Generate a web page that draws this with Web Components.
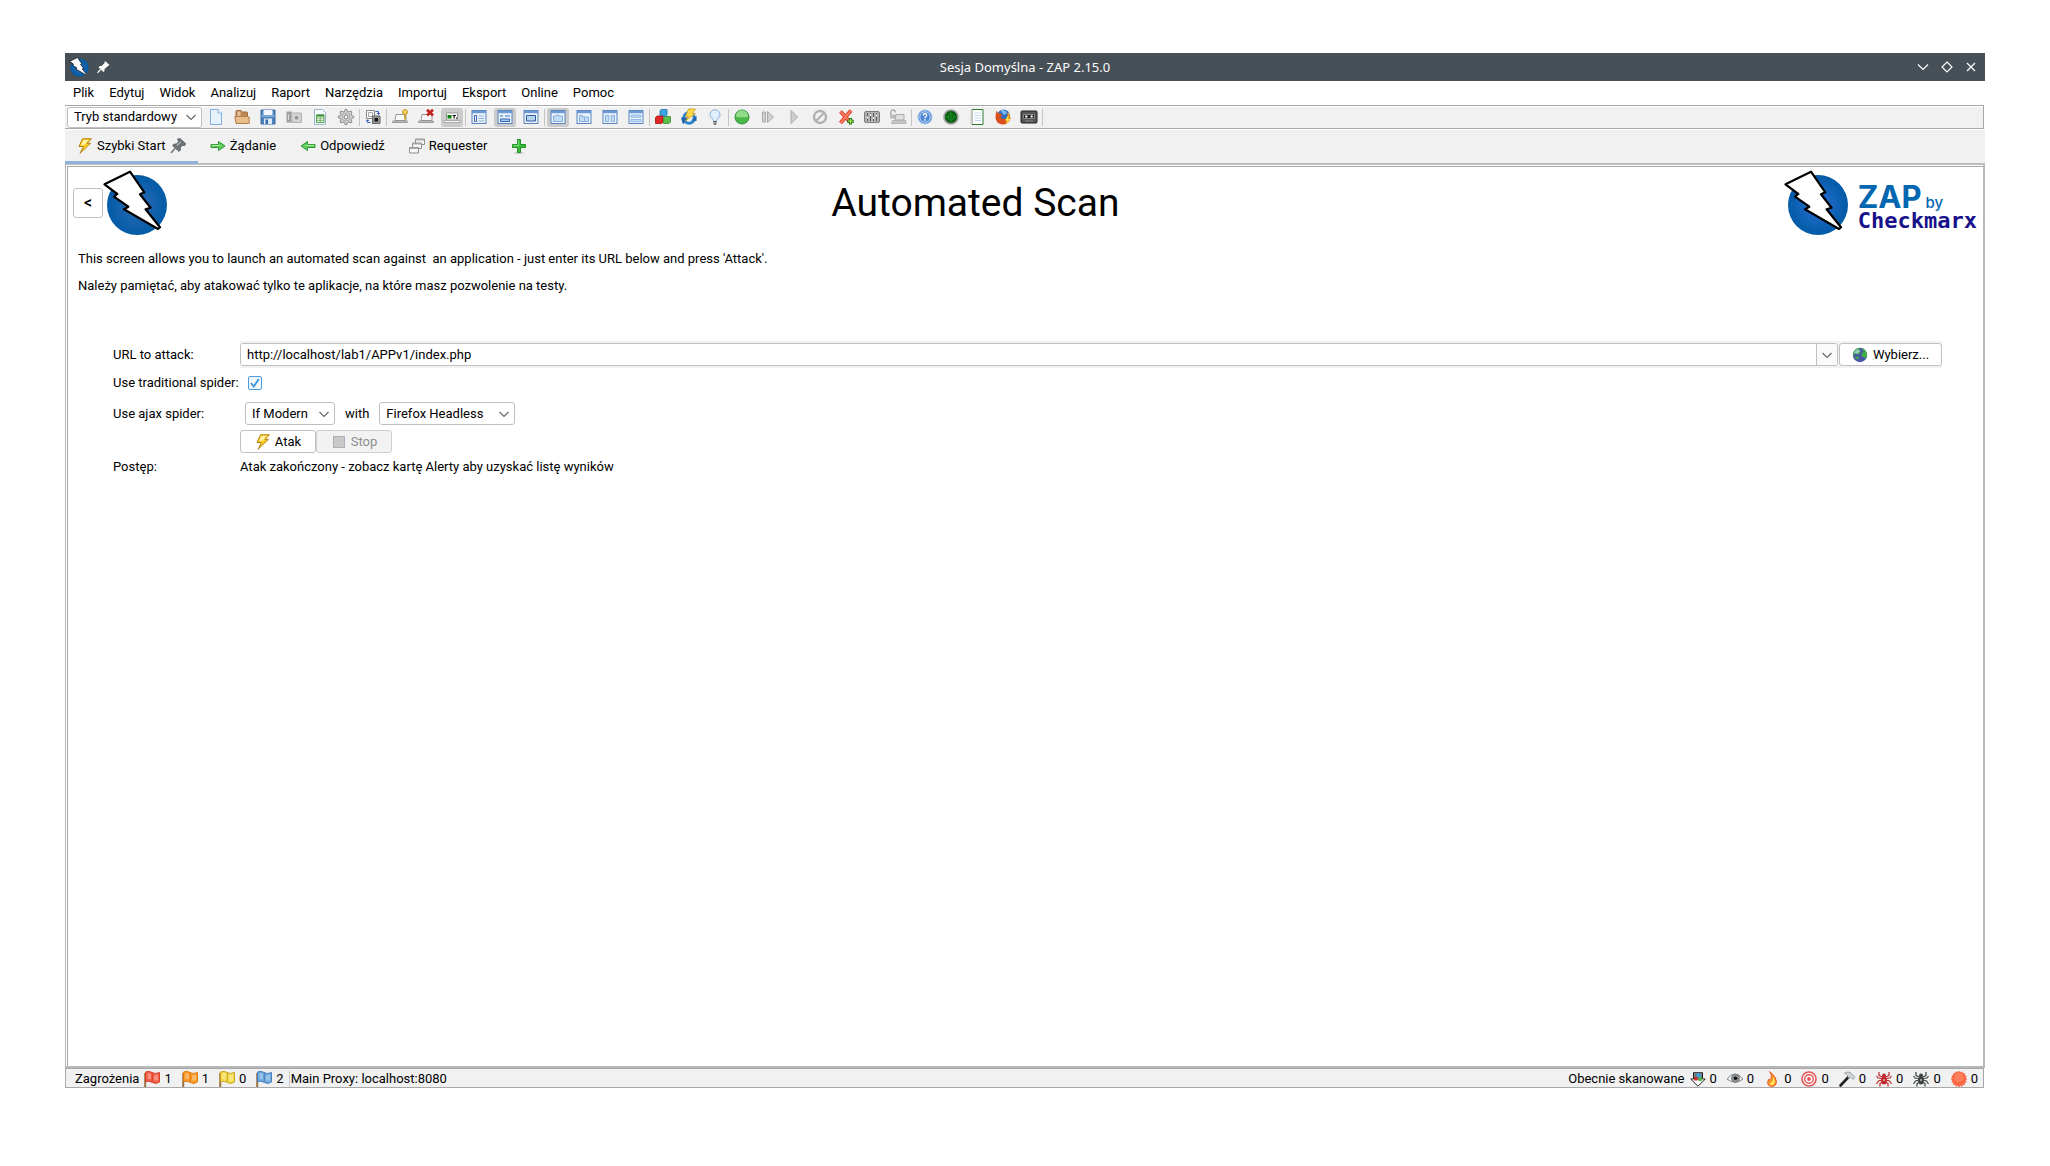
<!DOCTYPE html>
<html lang="pl">
<head>
<meta charset="utf-8">
<title>Sesja Domyślna - ZAP 2.15.0</title>
<style>
  body {
    margin: 0; box-sizing: border-box; min-height: 100vh; padding: 53px 65px 78px;
    background: #fff; color: #000; display: flex;
    font: 13px/16px Roboto, "Liberation Sans", sans-serif;
  }
</style>
</head>
<body>
<zap-window>
  <zap-titlebar slot="title">Sesja Domyślna - ZAP 2.15.0</zap-titlebar>
  <zap-menubar slot="menu" items="Plik,Edytuj,Widok,Analizuj,Raport,Narzędzia,Importuj,Eksport,Online,Pomoc"></zap-menubar>
  <zap-toolbar slot="toolbar"></zap-toolbar>
  <zap-tabs slot="tabs"></zap-tabs>
  <zap-scan></zap-scan>
  <zap-statusbar slot="status"></zap-statusbar>
</zap-window>

<script>
const BOLT = 'M1.5 14.3L27 1.7L41.3 22.3L37 24.3L47.6 37.7L42.6 39.3L57 57.2L55 59L21 39.3L25.3 36.7L11 26.7L14.3 24Z';
const PANE = '<rect x="1" y="1.5" width="14" height="13" fill="#eaf3fc" stroke="#5b84bd"/><path d="M1 3h14" stroke="#6d9ad6" stroke-width="2.4"/>';
const POLE = '<path d="M1.2 2V16" stroke="#9a7340" stroke-width="2"/>';
const flag = (a, b) => POLE + `<path d="M1.5 1Q5 -.5 8 1.500Q11 3.500 15.500 1.500V11Q12 13.500 8.500 11.500Q5 9.500 1.500 10.500Z" fill="${a}" stroke="${b}"/><path d="M3.500 2.500Q6 2 7 3V8.500Q5 7.500 3.500 8ZM10 4.500L14 3.800V9.500H10Z" fill="#fff" opacity=".3"/><path d="M8.300 2V11" stroke="${b}"/>`;
const spider = c => `<g stroke="${c}" fill="none" stroke-width="1.2"><path d="M6.500 6L3 4.500V1M9.500 6L13 4.500V1M6 7.500L2 7L.5 5M10 7.500L14 7L15.500 5M6 9L2.500 10L.5 13M10 9L13.500 10L15.500 13M6.500 11L4 12.500V15.500M9.500 11L12 12.500V15.500"/></g><circle cx="8" cy="4.500" r="2" fill="${c}"/><ellipse cx="8" cy="9.500" rx="2.900" ry="4" fill="${c}"/><path d="M7 8l2 2M9 8l-2 2" stroke="#ddd" stroke-width=".6"/>`;
const laptop = '<path d="M4 5.500H14V11.500H3Z" fill="#fafafa" stroke="#999"/><path d="M.7 12H15.300V13.500H.7Z" fill="#ddd" stroke="#888" stroke-width=".8"/>';
const star = (() => { let p = ''; for (let i = 0; i < 32; i++) { const r = i % 2 ? 6.600 : 8, a = i * Math.PI / 16; p += (i ? 'L' : 'M') + (8 + r * Math.cos(a)).toFixed(2) + ' ' + (8 + r * Math.sin(a)).toFixed(2); } return p + 'Z'; })();
const gearPath = (() => { let p = ''; for (let i = 0; i < 32; i++) { const r = (i % 4 < 2) ? 7.700 : 5.700, a = (i - .5) * Math.PI / 16; p += (i ? 'L' : 'M') + (8 + r * Math.cos(a)).toFixed(2) + ' ' + (8 + r * Math.sin(a)).toFixed(2); } return p + 'Z'; })();

const ICONS = {
  page: '<path d="M2.500.5H10L13.500 4V15.500H2.500Z" fill="#e6f3fd" stroke="#7fb0dc"/><path d="M10 .5V4H13.500" fill="#fff" stroke="#7fb0dc"/>',
  folder: '<path d="M2 13V2.500Q2 1.500 3 1.500H7L8 3H12.500Q13.500 3 13.500 4V13Z" fill="#bf8a55" stroke="#9c6a3c"/><path d="M.8 7.500H13L15.200 8V14.500H2Z" fill="#e9bd8c" stroke="#b27f4b"/><path d="M3.500 2.500H6.500V7H3.500Z" fill="#e8c49c"/>',
  save: '<path d="M1 1H15V15H1Z" fill="#4f84bf" stroke="#3868a6"/><path d="M3.500 1H12.500V6H3.500Z" fill="#f4f8fc"/><path d="M1.500 7H14.500" stroke="#8fb8e2" stroke-width="1.500"/><path d="M4 9.500H12V15H4Z" fill="#dfe9f2"/><path d="M5.500 10.500H8V15H5.500Z" fill="#3868a6"/>',
  camera: '<path d="M.5 2.500H6V13.500H.5Z" fill="#a0a0a0"/><path d="M5.500 4H15.500V13.500H5.500Z" fill="#cfcfcf" stroke="#b4b4b4"/><circle cx="10.500" cy="8.700" r="3" fill="#b5b5b5" stroke="#e6e6e6"/><circle cx="10.500" cy="8.700" r="1.200" fill="#888"/><path d="M2.500 5.500V11" stroke="#ddd"/>',
  sheet: '<path d="M2.500.5H10.500L13.500 3.500V15.500H2.500Z" fill="#f5faff" stroke="#9ab6d0"/><path d="M4.500 6H12V13.500H4.500Z" fill="#eef8ec" stroke="#4f9f45"/><path d="M4.500 6.500H12" stroke="#3f9436" stroke-width="2"/><path d="M4.500 9H12M4.500 11.300H12M8.200 7V13.500" stroke="#6fae66" stroke-width=".9"/>',
  gear: `<path d="${gearPath}" fill="#d2d2d2" stroke="#7c7c7c" stroke-width=".9"/><circle cx="8" cy="8" r="4" fill="#dedede" stroke="#999" stroke-width=".7"/><circle cx="8" cy="8" r="2" fill="#fff" stroke="#777"/>`,
  screens: '<path d="M1.500 1.500H9.500V9.500H1.500Z" fill="#fafafa" stroke="#888"/><path d="M3.500 3.500H7.500V7.500H3.500Z" fill="none" stroke="#aaa"/><path d="M7.500 7H15V14.500H7.500Z" fill="#999" stroke="#666"/><path d="M9.500 9H13V12.500H9.500Z" fill="#111"/><path d="M10.500 2.500H13.500V5M12 4L13.500 5.500L15 4M5.500 13.500H2.500V11M1 12.200L2.500 10.700L4 12.200" fill="none" stroke="#3c62c4"/>',
  laptopKey: laptop + '<circle cx="13" cy="3" r="2.600" fill="#f2cf55" stroke="#b08a20" stroke-width=".7"/><path d="M13 5V10.500" stroke="#c79a27" stroke-width="1.800"/>',
  laptopX: laptop + '<path d="M9 .8L15 6.500M15 .8L9 6.500" stroke="#c62222" stroke-width="2.600"/>',
  laptopT: '<path d="M2.500 4H13.500V11H2.500Z" fill="#fff" stroke="#999"/><path d="M0 11.500H16V13.500H0Z" fill="#f4f4f4" stroke="#999" stroke-width=".7"/><path d="M3.500 6H7.500V9.500H3.500Z" fill="#0a7a0a"/><path d="M8.500 6.500H12M10.200 6.500V9.500M12 9.200H13" stroke="#111" stroke-width="1.200"/>',
  paneLeft: PANE + '<path d="M3.500 6.500H5.500V12.500H3.500Z" fill="#fff" stroke="#3b68ad"/><path d="M7.500 7H13M7.500 9.500H13M7.500 12H13" stroke="#8fb3e0"/>',
  paneBottom: PANE + '<path d="M3 7H6M8 7H13" stroke="#8fb3e0" stroke-width="2"/><path d="M3.500 10H12.500V12.500H3.500Z" fill="#a9caf0" stroke="#2f61a8"/>',
  paneFull: PANE + '<path d="M3.500 6.500H12.500V12H3.500Z" fill="#b5d3f3" stroke="#34599a"/>',
  tabOne: PANE + '<path d="M3.500 7H6L6.500 6H8.500L9 7H12.500V12.500H3.500Z" fill="#c3dcf6" stroke="#86afe0"/>',
  tabTwo: PANE + '<path d="M3.500 6.500H6.500V8H8.500V12.500H3.500ZM8.500 8H12.500V12.500H8.500Z" fill="#c3dcf6" stroke="#86afe0"/>',
  split: PANE + '<path d="M3.500 6.500H6.800V12.500H3.500ZM9.200 6.500H12.500V12.500H9.200Z" fill="#c3dcf6" stroke="#86afe0"/>',
  rows: PANE + '<path d="M3 6H13V8.200H3ZM3 10.500H13V12.700H3Z" fill="#c3dcf6" stroke="#86afe0" stroke-width=".8"/>',
  blocks: '<path d="M5 1.500L6.500.5H12V6L10.500 7.500H5Z" fill="#38a3df" stroke="#1f77b5" stroke-width=".8"/><path d="M.5 8.500L2 7H8V13L6.500 14.500H.5Z" fill="#df2828" stroke="#a81010" stroke-width=".8"/><path d="M8.500 9L10 7.500H15.500V13L14 14.500H8.500Z" fill="#5cc14a" stroke="#35912a" stroke-width=".8"/>',
  update: '<circle cx="8" cy="9" r="5.300" fill="none" stroke="#2d85cf" stroke-width="3"/><path d="M0 8.500H7L2 15.500ZM15.500 6.500L10 11.500L15.500 12Z" fill="#1d64ad"/><path d="M7.500 0H14.500L11.500 4.500H14.500L4.500 12L7.500 7.500H4.500Z" fill="#ffd94a" stroke="#c69513" stroke-width=".7"/>',
  bulb: '<circle cx="8" cy="5.700" r="5" fill="#dcedfc" stroke="#8cb4e0"/><path d="M5.500 10L6.500 12H9.500L10.500 10" fill="#eef6fd" stroke="#8cb4e0" stroke-width=".8"/><path d="M6 12.500H10M6 14H10M7 15.400H9" stroke="#666" stroke-width="1.100"/><path d="M6.500 5L8 7L9.500 5" fill="none" stroke="#fff"/>',
  green: '<circle cx="8" cy="8" r="7" fill="#4cb84a" stroke="#33913a"/><path d="M1.800 7.500A6.200 6.200 0 0 1 14.200 7.500Q8 9.200 1.800 7.500Z" fill="#90dc88"/>',
  step: '<path d="M2.500 3H5.500V13H2.500ZM7.500 2.500L13.500 8L7.500 13.500Z" fill="#d0d0d0" stroke="#a8a8a8"/>',
  play: '<path d="M5 1.500L11.500 8L5 14.500Z" fill="#cfcfcf" stroke="#a8a8a8"/>',
  ban: '<circle cx="8" cy="8" r="6" fill="none" stroke="#b0b0b0" stroke-width="2.400"/><path d="M4.500 11.500L11.500 4.500" stroke="#b0b0b0" stroke-width="2.200"/>',
  xplus: '<path d="M2.500 2.500L12 13M13 1.500L2.500 14" stroke="#d93a22" stroke-width="3.800"/><path d="M2.500 2.500L12 13M13 1.500L2.500 14" stroke="#fc7a5e" stroke-width="2"/><path d="M12.500 9V15.500M9.300 12.200H15.700" stroke="#176b12" stroke-width="3"/><path d="M12.500 9.700V14.800M10 12.200H15" stroke="#a7e651" stroke-width="1.300"/>',
  sliders: '<rect x=".5" y="2.500" width="15" height="11" rx="1.500" fill="#b4b4b4" stroke="#7c7c7c"/><path d="M3.500 4V12M6.500 4V12M9.500 4V12M12.500 4V12" stroke="#555" stroke-width="1"/><path d="M3 8.500H4M6 6H7M9 9H10M12 6.500H13" stroke="#fff" stroke-width="2"/>',
  lockLaptop: '<path d="M.8 7V3.500Q.8 1 3 1T5.300 3.500" fill="none" stroke="#aaa" stroke-width="1.400"/><path d="M0 5.500H6V9.500H0Z" fill="#bbb"/><path d="M6 5.500H14V11H5Z" fill="#dedede" stroke="#aaa"/><path d="M2.500 11.500H16V14.500H1.500Z" fill="#c4c4c4" stroke="#aaa" stroke-width=".7"/>',
  help: '<circle cx="8" cy="8" r="7" fill="#5f96da" stroke="#9ebfe8"/><circle cx="8" cy="8" r="5.200" fill="#4b86d0" stroke="#cfe1f6" stroke-width=".8"/><path d="M6.200 6.500Q6.300 4.800 8 4.800T9.800 6.300Q9.800 7.300 8 8.300V9.300M8 10.300V11.700" fill="none" stroke="#fff" stroke-width="1.400"/>',
  radar: '<circle cx="8" cy="8" r="7" fill="#0a5a12" stroke="#a0a0a0" stroke-width="1.700"/><circle cx="8" cy="8" r="3.200" fill="none" stroke="#1c9a2a" stroke-width=".8"/><path d="M8 2.500V13.500M2.500 8H13.500" stroke="#1c9a2a" stroke-width=".8"/>',
  notebook: '<path d="M3 .5H14V15.500H3Z" fill="#fff" stroke="#2f7d32"/><path d="M2.500 1V15" stroke="#fff" stroke-width="2.500"/><path d="M1.500 2H4M1.500 4H4M1.500 6H4M1.500 8H4M1.500 10H4M1.500 12H4M1.500 14H4" stroke="#888" stroke-width=".9"/><path d="M5.500 4H12M5.500 6.500H12M5.500 9H12M5.500 11.500H12" stroke="#c3daf1"/>',
  firefox: '<circle cx="8.500" cy="7" r="6.500" fill="#2e6fc0"/><path d="M5.500 1.500Q10 0 12 4L9 6Z" fill="#7fb9ee"/><path d="M1.500 1.500Q2.500 4.500 5 4.500L7.500 6L5.500 8Q7 11 11 9.500Q13.500 7 12.500 3Q17 8 14.500 12Q11.500 16 7 15.500Q0 14 .5 7Z" fill="#d9501c"/><path d="M14 4Q17 11 10 14.500Q14 10 12.500 4Z" fill="#f9a72b"/><path d="M13 6.500L10 11.500H12.500L11 15.500L15.700 10H13Z" fill="#ffe04a"/>',
  tape: '<rect x="0" y="2" width="16" height="12" rx="1" fill="#555" stroke="#222"/><path d="M2.500 5.500H13.500V9.500H2.500Z" fill="#222" stroke="#999" stroke-width=".8"/><circle cx="5.300" cy="7.500" r="1.200" fill="#e8e8e8"/><circle cx="10.700" cy="7.500" r="1.200" fill="#e8e8e8"/><path d="M4 12H12" stroke="#888"/>',
  bolt: '<path d="M5.500.8H14.500L10 5.300H13.500L3 15.300L6.500 8.500H2Z" fill="#ffd028" stroke="#b67d10" stroke-linejoin="round"/><path d="M6.500 2H11.500L7.500 6.500L4 7.500Z" fill="#fff3ae"/>',
  pin: '<path d="M7.500 1L10 .5L15.500 5.500L15 7.500H12.500L10.500 9.500V12L9 13.500L2.500 7.500L4 6H6.500L8.500 3.500Z" fill="#6d7376" stroke="#5a5f62" stroke-width=".8"/><path d="M5 10.500L1 15" stroke="#777" stroke-width="1.600"/><path d="M10.500 4L7 7.500" stroke="#a9aeb0" stroke-width="1.600"/>',
  whitePin: '<path d="M10 2L14.500 6L13 7L9.500 10L9.500 12L8.300 13L3.500 8.200L4.700 7H6.500L9.500 4Z" fill="#fff"/><path d="M5.500 10.500L2.500 13.800" stroke="#fff" stroke-width="1.200"/>',
  right: '<path d="M1 6.500H8.500V3.500L15 8L8.500 12.500V9.500H1Z" fill="#5fd05c" stroke="#2f9433" stroke-linejoin="round"/><path d="M2 7.400H9.500" stroke="#b4f0aa"/>',
  left: '<path d="M15 6.500H7.500V3.500L1 8L7.500 12.500V9.500H15Z" fill="#5fd05c" stroke="#2f9433" stroke-linejoin="round"/><path d="M14 7.400H6.500" stroke="#b4f0aa"/>',
  windows: '<g fill="#f6f6f6" stroke="#8f8f8f"><path d="M6.500 1H15.500V6.500H6.500Z"/><path d="M3.500 5H12.500V10.500H3.500Z"/><path d="M.5 9.500H9.500V15H.5Z"/></g><path d="M6.500 1.700H15.500M3.500 5.700H12.500M.5 10.200H9.500" stroke="#a8a8a8" stroke-width="1.600"/>',
  plus: '<ellipse cx="8" cy="15" rx="5" ry="1" fill="#ccc"/><path d="M6.500 1.500H9.500V6.500H14.500V9.500H9.500V14.500H6.500V9.500H1.500V6.500H6.500Z" fill="#3dbb3d" stroke="#1d9427" stroke-linejoin="round"/><path d="M7.500 2.500V7.500H2.500" fill="none" stroke="#85dd7e"/>',
  globe: '<circle cx="8" cy="8" r="7.200" fill="#4a55a8"/><path d="M3 3Q5 .8 8 1L7 3.500L9 5L6.500 7.500L3.500 6.500L1 9Q.5 5.500 3 3ZM9.500 1.300Q13.500 2 15 6.500Q15.500 10 13 11.500L11 9.500L9 9L10 6L12 5ZM2 10L6 9.500L7.500 11L5.500 12.500Z" fill="#3fae45"/><path d="M4 3Q6.500 1.500 8.500 4L5 7L2 6Z" fill="#c7d8f7" opacity=".65"/>',
  stop: '<rect x="2.500" y="2.500" width="11" height="11" fill="#c9c9c9" stroke="#b0b0b0"/>',
  flagRed: flag('#f4604a', '#d8402c'), flagOrange: flag('#fb9a2a', '#e07f10'), flagYellow: flag('#f6dc4c', '#c9a51b'), flagBlue: flag('#6fa8e0', '#4a80bd'),
  addon: '<path d="M3.500 1.500H12.500V8H15.300L8 15.300L.7 8H3.500Z" fill="#fff" stroke="#222" stroke-linejoin="round"/><path d="M4 1.500H12V9H4Z" fill="#777"/><path d="M6.500 2.500H11V6H6.500Z" fill="#3da0dd"/><path d="M4 6H7.500V9.500H4Z" fill="#d02a2a"/><path d="M8.500 6.500H12V10H8.500Z" fill="#4dbb45"/>',
  eye: '<path d="M0 8Q8-2 16 8Q8 14.500 0 8Z" fill="#f2f2f2" stroke="#8a8a8a"/><circle cx="8.500" cy="7.200" r="4" fill="#8d959c" stroke="#666" stroke-width=".7"/><circle cx="8.500" cy="7.200" r="1.800" fill="#111"/>',
  fire: '<path d="M5.500 .5Q8.500 4 7 7.500Q6 9.500 4.500 8.500Q2.500 12 4.500 14.200Q6 15.700 8.500 15.500Q12.500 15 12.500 10.500Q12 5 5.500 .5Z" fill="#f9922a" stroke="#e4521c" stroke-width=".9"/><path d="M9 5.500Q11.500 9.500 10.500 12.500Q9.500 14.500 7 14.300Q5.500 13.500 6 12Q9.500 10.500 9 5.500Z" fill="#ffe45c"/>',
  target: '<circle cx="8" cy="8" r="7" fill="#fff" stroke="#e25353" stroke-width="1.600"/><circle cx="8" cy="8" r="4.300" fill="#fff" stroke="#e25353" stroke-width="1.400"/><circle cx="8" cy="8" r="1.900" fill="#e25353"/>',
  hammer: '<path d="M9.500 6L1.500 14.500" stroke="#222" stroke-width="2.600" stroke-linecap="round"/><path d="M5.500 2Q9.500-.3 12 2L16 6.500L14 8.500L12 6.500L10 7.500L8.500 4.500Q7.500 3 5.500 2Z" fill="#d0d5d8" stroke="#8f9598" stroke-width=".8"/>',
  spiderRed: spider('#c0272d'), spiderBlack: spider('#3c4242'),
  burst: `<path d="${star}" fill="#fb6a45" stroke="#ef5433" stroke-width=".4"/><circle cx="8" cy="6.500" r="4.500" fill="#ff8d6b" opacity=".6"/>`,
  chevron: '<path d="M3.500 6L8 10.500L12.500 6" fill="none" stroke="#666" stroke-width="1.100"/>',
  down: '<path d="M3 5.500L8 10.500L13 5.500" fill="none" stroke="#fff" stroke-width="1.200"/>',
  diamond: '<path d="M8 3L13 8L8 13L3 8Z" fill="none" stroke="#fff" stroke-width="1.200"/>',
  close: '<path d="M4 4L12 12M12 4L4 12" fill="none" stroke="#fff" stroke-width="1.200"/>'
};
const svg = name => `<svg class="i" width="16" height="16" viewBox="0 0 16 16" overflow="visible" aria-hidden="true">${ICONS[name]}</svg>`;
const BASE = `:host,*{box-sizing:border-box}svg{display:block;flex:none}button,input,select{font:inherit;color:inherit;margin:0}
button{background:#fff;border:1px solid #c0c0c0;border-radius:3px;padding:0;display:flex;align-items:center;justify-content:center}
select{appearance:none;background:#fff;border:1px solid #c0c0c0;border-radius:3px;padding:0 20px 0 6px;width:100%;height:100%}
.sel{display:grid;height:23px;flex:none}.sel>*{grid-area:1/1}.sel>svg{place-self:center end;margin-right:3px;pointer-events:none}`;

class ZapElement extends HTMLElement {
  connectedCallback() {
    if (!this.shadowRoot) this.attachShadow({ mode: 'open' }).innerHTML = `<style>${BASE}${this.css()}</style>${this.html()}`;
  }
}

customElements.define('zap-window', class extends ZapElement {
  css() { return `:host{flex:1;min-width:0;display:flex;flex-direction:column;background:#fff}
    main{flex:1;display:flex;flex-direction:column;border:1px solid #b4b4b4;border-top:0;border-right:2px solid #b8b8b8;border-bottom:2px solid #b8b8b8;padding:1px 0 0 1px}
    .in{flex:1;border:1px solid #a8a8a8;border-width:1px 0 0 1px}`; }
  html() { return `<slot name="title"></slot><slot name="menu"></slot><slot name="toolbar"></slot><slot name="tabs"></slot><main><div class="in"><slot></slot></div></main><slot name="status"></slot>`; }
});

customElements.define('zap-logo', class extends ZapElement {
  css() { return `:host{display:block;width:64px;height:66px;flex:none}svg{width:100%;height:100%}`; }
  html() {
    const mid = this.getAttribute('tone') || '#2f6cb6';
    return `<svg viewBox="0 0 64 66" aria-hidden="true"><defs><radialGradient id="g"><stop stop-color="${mid}"/><stop offset="1" stop-color="#025ba6"/></radialGradient></defs><circle cx="34" cy="35" r="30" fill="url(#g)"/><path d="${BOLT}" fill="#fff" stroke="#000" stroke-width="2.200" stroke-linejoin="round"/></svg>`;
  }
});

customElements.define('zap-titlebar', class extends ZapElement {
  css() { return `:host{display:flex;align-items:center;height:28px;background:#475057;color:#fcfcfc;font:13px/18px "Noto Sans",sans-serif;padding:0 4px}
    .side{width:84px;display:flex;align-items:center;gap:6px}.end{justify-content:flex-end;gap:8px;padding-right:2px}
    zap-logo{width:20px;height:20px}span{flex:1;text-align:center}button{background:none;border:0}`; }
  html() { return `<div class="side"><zap-logo></zap-logo>${svg('whitePin')}</div><span><slot></slot></span><div class="side end"><button aria-label="Minimalizuj">${svg('down')}</button><button aria-label="Maksymalizuj">${svg('diamond')}</button><button aria-label="Zamknij">${svg('close')}</button></div>`; }
});

customElements.define('zap-menubar', class extends ZapElement {
  css() { return `:host{display:flex;height:24px;align-items:center}nav{display:flex;gap:15px;padding-left:8px}button{border:0;background:none}`; }
  html() { return `<nav>${this.getAttribute('items').split(',').map(t => `<button>${t}</button>`).join('')}</nav>`; }
});

customElements.define('zap-toolbar', class extends ZapElement {
  css() { return `:host{display:flex;align-items:center;height:24px;border:1px solid #a8a8a8;border-width:1px 1px 1px 0;box-shadow:inset 0 1px #fff,0 1px #fff;background:#f1f1f1;padding-left:2px;margin-right:1px}
    .sel{width:135px;height:21px;margin-right:1px}
    button{width:26px;height:22px;border:0;background:none}
    .on span{background:#cbcbcb;border-radius:3px;width:22px;height:19px;display:grid;place-items:center}
    i{width:1px;height:17px;background:#c4c4c4}`; }
  html() {
    const list = 'page folder save camera sheet gear | screens | laptopKey laptopX *laptopT | paneLeft *paneBottom paneFull | *tabOne tabTwo split rows | blocks update bulb | green step play ban xplus sliders lockLaptop | help radar notebook firefox tape |'.split(' ');
    return `<div class="sel"><select aria-label="Tryb"><option>Tryb standardowy</option></select>${svg('chevron')}</div>` + list.map(n => {
      if (n === '|') return '<i></i>';
      const on = n[0] === '*', k = on ? n.slice(1) : n;
      return `<button aria-label="${k}" class="${on ? 'on' : ''}"><span>${svg(k)}</span></button>`;
    }).join('');
  }
});

customElements.define('zap-tabs', class extends ZapElement {
  css() { return `:host{display:flex;height:35px;margin-top:1px;background:#f1f1f1;border-bottom:2px solid #bcbcbc}
    button{border:0;border-radius:0;background:none;gap:4px;padding:0 12px;height:34px;border-bottom:3px solid transparent}
    button.on{border-color:#8db3dc}`; }
  html() { return `<button class="on">${svg('bolt')}Szybki Start${svg('pin')}</button><button>${svg('right')}Żądanie</button><button>${svg('left')}Odpowiedź</button><button>${svg('windows')}Requester</button><button aria-label="Dodaj">${svg('plus')}</button>`; }
});

customElements.define('zap-brand', class extends ZapElement {
  css() { return `:host{display:flex;gap:10px;align-items:center}
    .t{display:grid;grid-template-columns:auto 1fr;column-gap:4px;align-items:baseline;padding-top:5px}.z{color:#0266b1;font:700 31px/30px Inter,sans-serif}
    .b{color:#0266b1;font:500 15px/16px Inter,sans-serif}
    .c{grid-column:1/3;color:#17118a;font:bold 22px/18px "DejaVu Sans Mono",monospace}`; }
  html() { return `<zap-logo tone="#2a6fd6"></zap-logo><div class="t"><span class="z">ZAP</span><span class="b">by</span><span class="c">Checkmarx</span></div>`; }
});

customElements.define('zap-scan', class extends ZapElement {
  css() { return `:host{display:block;padding-top:3px}
    header{display:flex;align-items:center;padding:0 6px 0 5px}
    .back{width:30px;height:30px;font-size:16px;font-weight:500}
    h1{flex:1;margin:0;text-align:center;font-size:39px;line-height:48px;font-weight:400}
    p{margin:0 10px;line-height:27px;white-space:pre-wrap}header+p{margin-top:9px}
    form{display:grid;grid-template-columns:127px 1fr;grid-template-rows:27px 29px 33px 23px 28px;align-items:center;margin:42px 41px 0 45px}
    .url{display:flex;background:#f2f2f2;height:27px;align-items:center;gap:1px}
    .combo{flex:1;display:flex;height:23px;border:1px solid #c0c0c0;border-radius:3px;background:#fff;overflow:hidden}
    .combo input{flex:1;min-width:0;border:0;padding:0 6px;outline:0;background:#fff}
    .combo button{width:21px;border:0;border-left:1px solid #c0c0c0;border-radius:0;background:#fafafa}
    .pick{width:103px;height:23px;gap:5px}
    input[type=checkbox]{appearance:none;width:14px;height:14px;border:1px solid #4a9be0;border-radius:2px;background:#f1f7fd}
    .check{display:grid;width:14px;margin-left:8px}.check>*{grid-area:1/1}.check svg{width:14px;height:14px;pointer-events:none}
    .row{display:flex;align-items:center;gap:10px;padding-left:5px}.s{width:90px}.m{width:136px}
    .go{display:flex}.go button{width:76px;height:23px;gap:4px}.go button:disabled{background:#f2f2f2;border-color:#cfcfcf;color:#8e8e8e}
    output{display:block}`; }
  html() { return `<header><button class="back">&lt;</button><zap-logo></zap-logo><h1>Automated Scan</h1><zap-brand></zap-brand></header>
<p>This screen allows you to launch an automated scan against  an application - just enter its URL below and press 'Attack'.</p>
<p>Należy pamiętać, aby atakować tylko te aplikacje, na które masz pozwolenie na testy.</p>
<form onsubmit="return false">
  <label for="url">URL to attack:</label>
  <div class="url"><div class="combo"><input id="url" type="text" value="http://localhost/lab1/APPv1/index.php"><button type="button" aria-label="Historia">${svg('chevron')}</button></div><button type="button" class="pick">${svg('globe')}Wybierz...</button></div>
  <label for="trad">Use traditional spider:</label>
  <div class="check"><input id="trad" type="checkbox" checked><svg viewBox="0 0 14 14"><path d="M3 7L5.800 10.500L10.800 3" fill="none" stroke="#3b93e0" stroke-width="1.800"/></svg></div>
  <label for="ajax">Use ajax spider:</label>
  <div class="row"><div class="sel s"><select id="ajax"><option>If Modern</option></select>${svg('chevron')}</div><label for="browser">with</label><div class="sel m"><select id="browser"><option>Firefox Headless</option></select>${svg('chevron')}</div></div>
  <span></span>
  <div class="go"><button>${svg('bolt')}Atak</button><button type="button" disabled>${svg('stop')}Stop</button></div>
  <label for="progress">Postęp:</label>
  <output id="progress">Atak zakończony - zobacz kartę Alerty aby uzyskać listę wyników</output>
</form>`; }
});

customElements.define('zap-count', class extends ZapElement {
  css() { return `:host{display:flex;align-items:center;gap:4px}`; }
  html() { return `${svg(this.getAttribute('icon'))}<span><slot></slot></span>`; }
});

customElements.define('zap-statusbar', class extends ZapElement {
  css() { return `:host{display:flex;justify-content:space-between;align-items:center;height:20px;margin-right:1px;background:#f1f1f1;border:1px solid #a8a8a8;padding:2px 5px 0 9px}
    div{display:flex;align-items:center;gap:5px}div div{gap:10px}.p{border-left:1px solid #c8c8c8;padding-left:1px}`; }
  html() {
    const c = (i, n) => `<zap-count icon="${i}">${n}</zap-count>`;
    return `<div><span>Zagrożenia</span><div>${c('flagRed', 1)}${c('flagOrange', 1)}${c('flagYellow', 0)}${c('flagBlue', 2)}</div><span class="p">Main Proxy: localhost:8080</span></div>
<div><span>Obecnie skanowane</span><div>${'addon eye fire target hammer spiderRed spiderBlack burst'.split(' ').map(i => c(i, 0)).join('')}</div></div>`;
  }
});
</script>
</body>
</html>
